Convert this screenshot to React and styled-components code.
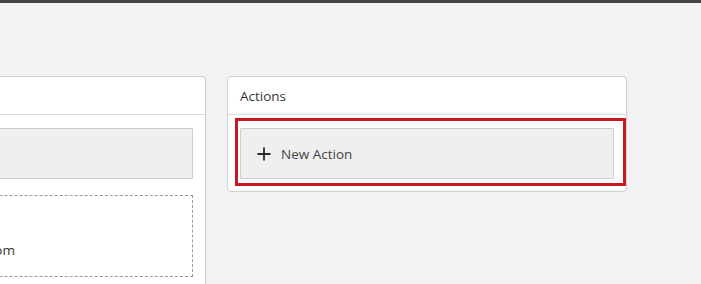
import React from "react";
import styled, { createGlobalStyle } from "styled-components";

const Global = createGlobalStyle`
  html, body { margin: 0; padding: 0; }
  body {
    width: 701px;
    height: 284px;
    overflow: hidden;
    font-family: "Open Sans", "Noto Sans", Arial, sans-serif;
    background: repeating-linear-gradient(90deg, #f1f1f1 0 1px, #f4f4f4 1px 2px);
  }
`;

const TopBar = styled.div`
  height: 3px;
  background: #444;
`;

const Stage = styled.div`
  display: flex;
  align-items: flex-start;
  gap: 21px;
  margin-top: 73px;
  margin-left: -194px;
`;

const Panel = styled.section`
  position: relative;
  box-sizing: border-box;
  width: 400px;
  background: #fff;
  border: 1px solid #cfcfcf;
  border-radius: 4px;
  ${(p) => p.$open && `border-bottom: none; border-radius: 4px 4px 0 0; height: 220px;`}
`;

const Header = styled.div`
  box-sizing: border-box;
  height: 38px;
  padding: 0 12px;
  display: flex;
  align-items: center;
  border-bottom: 1px solid #dcdcdc;
  font-size: 13.5px;
  color: #333;
`;

const Body = styled.div`
  padding: 13px 12px 12px;
  display: flex;
  flex-direction: column;
  gap: 16px;
`;

const AddButton = styled.button`
  box-sizing: border-box;
  height: 51px;
  width: 100%;
  display: flex;
  align-items: center;
  gap: 10px;
  padding: 0 0 0 16px;
  background: #efefef;
  border: 1px solid #cdcdcd;
  border-radius: 1px;
  font-family: inherit;
  font-size: 13.5px;
  color: #444;
  text-align: left;
`;

const DropZone = styled.div`
  box-sizing: border-box;
  height: 82px;
  border: 1px dashed #9a9a9a;
  padding: 44px 177px 0 12px;
  text-align: right;
  font-size: 13.5px;
  line-height: 20px;
  color: #333;
  white-space: nowrap;
`;

const Highlight = styled.div`
  position: absolute;
  left: 7px;
  top: 41px;
  width: 391px;
  height: 68px;
  box-sizing: border-box;
  border: 3px solid #c8191f;
  pointer-events: none;
`;

const PlusIcon = () => (
  <svg width="14" height="14" viewBox="0 0 14 14">
    <path d="M7 0.5V13.5M0.5 7H13.5" stroke="#2b2b2b" strokeWidth="1.8" />
  </svg>
);

export default function App() {
  return (
    <>
      <Global />
      <TopBar />
      <Stage>
        <Panel $open>
          <Header />
          <Body>
            <AddButton aria-label="New Trigger">
              <PlusIcon />
            </AddButton>
            <DropZone>notifications@example.com</DropZone>
          </Body>
        </Panel>
        <Panel>
          <Header>Actions</Header>
          <Body>
            <AddButton>
              <PlusIcon />
              New Action
            </AddButton>
          </Body>
          <Highlight />
        </Panel>
      </Stage>
    </>
  );
}
